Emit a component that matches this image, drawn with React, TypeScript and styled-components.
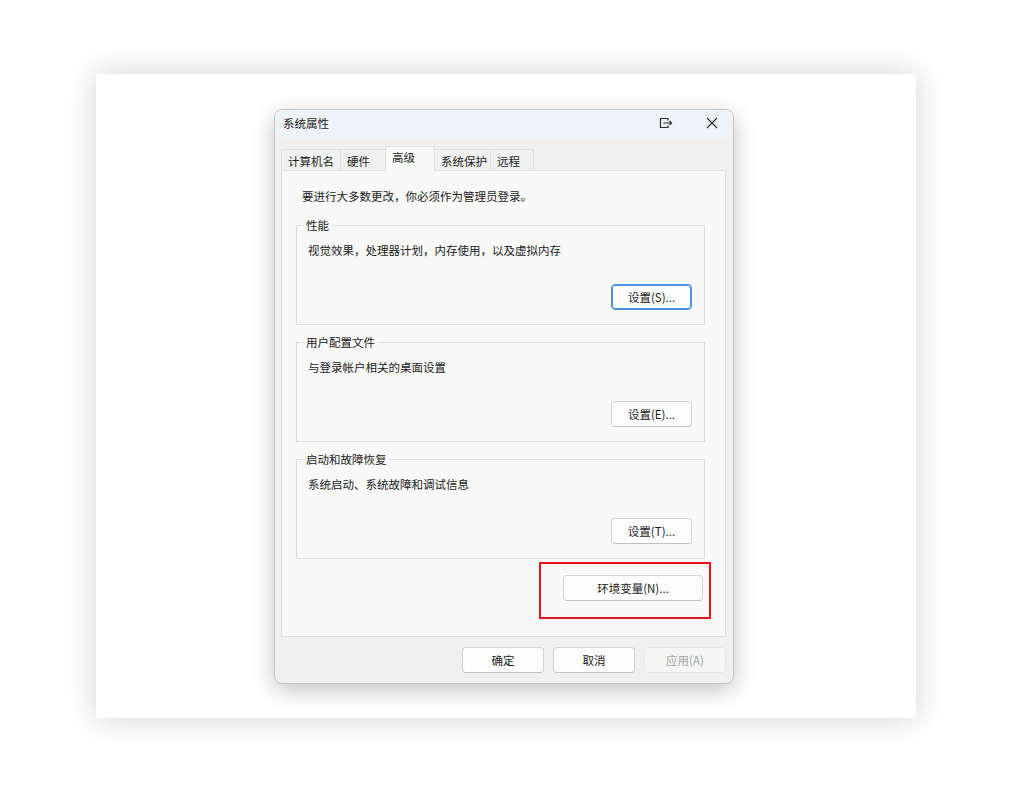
import React from "react";
import styled, { createGlobalStyle } from "styled-components";

type Group = {
  title: string;
  text: string;
  action: string;
  focused?: boolean;
};

const tabs = [
  { label: "计算机名", width: 60 },
  { label: "硬件", width: 46 },
  { label: "高级", width: 50, active: true },
  { label: "系统保护", width: 57 },
  { label: "远程", width: 44 },
];

const groups: Group[] = [
  { title: "性能", text: "视觉效果，处理器计划，内存使用，以及虚拟内存", action: "设置(S)...", focused: true },
  { title: "用户配置文件", text: "与登录帐户相关的桌面设置", action: "设置(E)..." },
  { title: "启动和故障恢复", text: "系统启动、系统故障和调试信息", action: "设置(T)..." },
];

const GlobalStyle = createGlobalStyle`
  html, body {
    margin: 0;
    padding: 0;
    background: #ffffff;
  }
  body {
    font-family: "Noto Sans CJK SC", "Noto Sans", "Liberation Sans", sans-serif;
    font-size: 11.5px;
    color: #1b1b1b;
  }
  * {
    box-sizing: border-box;
  }
`;

const Page = styled.div`
  width: 1012px;
  height: 793px;
  display: flex;
  align-items: center;
  justify-content: center;
`;

const Card = styled.div`
  width: 820px;
  height: 644px;
  margin-top: -1px;
  background: #ffffff;
  box-shadow: 0 0 30px rgba(0, 0, 0, 0.18);
  padding: 35px 182px 34px 178px;
`;

const Dialog = styled.div`
  width: 460px;
  height: 575px;
  display: flex;
  flex-direction: column;
  background: #f0f0f0;
  border: 1px solid #c4c4c4;
  border-radius: 8px;
  overflow: hidden;
  box-shadow: 0 6px 22px rgba(0, 0, 0, 0.24);
`;

const TitleBar = styled.div`
  height: 28px;
  flex: none;
  display: flex;
  align-items: center;
  background: #eef2f9;
  padding: 0 0 2px 8px;
`;

const Title = styled.span`
  flex: 1;
  line-height: 16px;
  color: #1b1b1b;
`;

const TitleButton = styled.div<{ $width: number }>`
  width: ${(p) => p.$width}px;
  height: 26px;
  display: flex;
  align-items: center;
  justify-content: center;
  color: #2b2b2b;
`;

const Body = styled.div`
  flex: 1;
  display: flex;
  flex-direction: column;
  padding: 9px 7px 10px 6px;
`;

const TabRow = styled.div`
  display: flex;
  align-items: flex-end;
  height: 24px;
  margin-bottom: -1px;
  padding-left: 1px;
  position: relative;
  z-index: 1;
`;

const Tab = styled.div<{ $width: number; $active?: boolean }>`
  width: ${(p) => p.$width}px;
  height: ${(p) => (p.$active ? 25 : 22)}px;
  padding: ${(p) => (p.$active ? "2px" : "3px")} 0 0 6px;
  line-height: 16px;
  background: ${(p) => (p.$active ? "#f9f9f9" : "#f0f0f0")};
  border: 1px solid #dfdfdf;
  border-bottom: ${(p) => (p.$active ? "none" : "1px solid #dfdfdf")};
  margin-left: -1px;
  white-space: nowrap;
  color: #1b1b1b;
`;

const Panel = styled.div`
  flex: 1;
  display: flex;
  flex-direction: column;
  background: #f9f9f9;
  border: 1px solid #dfdfdf;
  padding: 17px 20px 0 14px;
`;

const Intro = styled.p`
  margin: 0 0 13px 6px;
  line-height: 16px;
`;

const GroupBox = styled.fieldset`
  margin: 0 0 9px 0;
  padding: 0 12px 14px 11px;
  border: 1px solid #dcdcdc;
  border-radius: 0;
  display: flex;
  flex-direction: column;
  min-width: 0;
`;

const Legend = styled.legend`
  margin-left: -4px;
  padding: 0 2px;
  line-height: 16px;
  color: #1b1b1b;
`;

const Description = styled.div`
  margin-top: 9px;
  line-height: 16px;
`;

const GroupActions = styled.div`
  display: flex;
  justify-content: flex-end;
  margin-top: 26px;
`;

const Button = styled.button<{ $width?: number; $focused?: boolean; $disabled?: boolean }>`
  width: ${(p) => p.$width ?? 81}px;
  height: 26px;
  padding: 0;
  font-family: inherit;
  font-size: 11.5px;
  line-height: 16px;
  color: ${(p) => (p.$disabled ? "#a3a3a3" : "#1b1b1b")};
  background: ${(p) => (p.$disabled ? "#f5f5f5" : "#fdfdfd")};
  border: 1px solid ${(p) => (p.$focused ? "#4a93df" : p.$disabled ? "#e6e6e6" : "#d3d3d3")};
  border-bottom-color: ${(p) => (p.$focused ? "#4a93df" : p.$disabled ? "#e6e6e6" : "#bfbfbf")};
  box-shadow: ${(p) => (p.$focused ? "inset 0 0 0 1px #4a93df" : "none")};
  border-radius: 4px;
`;

const EnvRow = styled.div`
  display: flex;
  justify-content: flex-end;
  margin: -6px -6px 0 0;
`;

const Highlight = styled.div`
  border: 2px solid #e3141f;
  padding: 11px 6px 16px 22px;
`;

const Footer = styled.div`
  display: flex;
  justify-content: flex-end;
  gap: 9px;
  margin-top: 10px;
`;

const SnapIcon = () => (
  <svg width="16" height="12" viewBox="0 0 16 12" fill="none" stroke="currentColor" strokeWidth="1.2">
    <path d="M10 3.5V1.5H2.5V10.5H10V8.5" />
    <path d="M5.5 6H13.5M11.5 4L13.5 6L11.5 8" />
  </svg>
);

const CloseIcon = () => (
  <svg width="12" height="12" viewBox="0 0 12 12" fill="none" stroke="currentColor" strokeWidth="1.1">
    <path d="M1 1L11 11M11 1L1 11" />
  </svg>
);

const App: React.FC = () => {
  return (
    <>
      <GlobalStyle />
      <Page>
        <Card>
          <Dialog>
            <TitleBar>
              <Title>系统属性</Title>
              <TitleButton $width={50}>
                <SnapIcon />
              </TitleButton>
              <TitleButton $width={42}>
                <CloseIcon />
              </TitleButton>
            </TitleBar>
            <Body>
              <TabRow>
                {tabs.map((t) => (
                  <Tab key={t.label} $width={t.width} $active={t.active}>
                    {t.label}
                  </Tab>
                ))}
              </TabRow>
              <Panel>
                <Intro>要进行大多数更改，你必须作为管理员登录。</Intro>
                {groups.map((g) => (
                  <GroupBox key={g.title}>
                    <Legend>{g.title}</Legend>
                    <Description>{g.text}</Description>
                    <GroupActions>
                      <Button $focused={g.focused}>{g.action}</Button>
                    </GroupActions>
                  </GroupBox>
                ))}
                <EnvRow>
                  <Highlight>
                    <Button $width={140}>环境变量(N)...</Button>
                  </Highlight>
                </EnvRow>
              </Panel>
              <Footer>
                <Button $width={82}>确定</Button>
                <Button $width={82}>取消</Button>
                <Button $width={82} $disabled>
                  应用(A)
                </Button>
              </Footer>
            </Body>
          </Dialog>
        </Card>
      </Page>
    </>
  );
};

export default App;
